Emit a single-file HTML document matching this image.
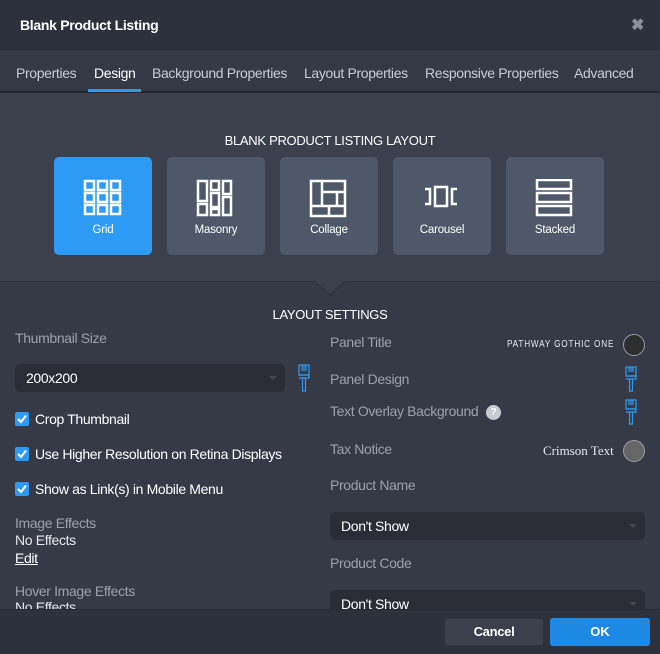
<!DOCTYPE html><html><head><style>
*{box-sizing:border-box;margin:0;padding:0}
body{width:660px;height:654px;background:#2d313b;font-family:"Liberation Sans",sans-serif;position:relative;overflow:hidden;color:#fff}
.a{position:absolute;white-space:nowrap}
.lbl{color:#9ba1ac;font-size:14px;letter-spacing:-0.35px}
.w{color:#fff;font-size:14px;letter-spacing:-0.35px}
.tab{position:absolute;top:65px;font-size:14px;color:#c9ccd3;letter-spacing:-0.35px}
.btn{position:absolute;top:157px;width:98px;height:98px;border-radius:5px;background:#4f5869}
.btn span{position:absolute;top:67px;left:0;right:0;text-align:center;font-size:11.5px;color:#fff;letter-spacing:-0.2px}
.btn svg{position:absolute;left:29px;top:22px}
.sel{position:absolute;background:#2a2d35;border-radius:5px;height:28px;color:#fff;font-size:14px;padding:6px 11px;letter-spacing:-0.35px}
.sel:after{content:"";position:absolute;right:8px;top:12px;border:4px solid transparent;border-top-color:#444852}
.cb{position:absolute;left:15px;width:14px;height:14px;background:#2d9bf6;border-radius:2px}
.cb svg{position:absolute;left:2px;top:2px}
</style></head><body>
<div class="a" style="left:20px;top:17px;font-size:14px;font-weight:bold;letter-spacing:-0.3px">Blank Product Listing</div>
<div class="a" style="left:631px;top:15px;font-size:16px;font-weight:bold;color:#8b9099">✖</div>
<div class="a" style="left:0;top:49px;width:660px;height:44px;background:#343945;border-top:1px solid #262a32;border-bottom:2px solid #23262d"></div>
<div class="tab" style="left:16px">Properties</div>
<div class="tab" style="left:94px;color:#fff">Design</div>
<div class="tab" style="left:152px">Background Properties</div>
<div class="tab" style="left:304px">Layout Properties</div>
<div class="tab" style="left:425px">Responsive Properties</div>
<div class="tab" style="left:574px">Advanced</div>
<div class="a" style="left:88px;top:89px;width:53px;height:3px;background:#2d9bf6"></div>
<div class="a" style="left:0;top:93px;width:660px;height:188px;background:#3b404c"></div>
<div class="a" style="left:0;top:281px;width:660px;height:328px;background:#353a46;border-top:1px solid #2b2f38"></div>
<svg class="a" style="left:314px;top:280px" width="32" height="16"><path d="M0 1 L16 15 L32 1" fill="#3b404c" stroke="#2b2f38" stroke-width="1"/></svg>
<div class="a" style="left:0;top:133px;width:660px;text-align:center;font-size:13px;letter-spacing:-0.3px">BLANK PRODUCT LISTING LAYOUT</div>
<div class="btn" style="left:54px;background:#2d9bf6"><svg width="40" height="40" fill="none" stroke="#fff" stroke-width="2.5"><rect x="2" y="2" width="9" height="9"/><rect x="15" y="2" width="9" height="9"/><rect x="28" y="2" width="9" height="9"/><rect x="2" y="14" width="9" height="9"/><rect x="15" y="14" width="9" height="9"/><rect x="28" y="14" width="9" height="9"/><rect x="2" y="26" width="9" height="9"/><rect x="15" y="26" width="9" height="9"/><rect x="28" y="26" width="9" height="9"/></svg><span>Grid</span></div>
<div class="btn" style="left:167px"><svg width="40" height="40" fill="none" stroke="#fff" stroke-width="2.5"><rect x="2" y="2" width="9" height="20"/><rect x="15" y="2" width="8" height="9"/><rect x="27" y="2" width="8" height="13"/><rect x="15" y="14" width="8" height="14"/><rect x="2" y="25" width="9" height="11"/><rect x="15" y="30" width="8" height="6"/><rect x="27" y="18" width="8" height="18"/></svg><span>Masonry</span></div>
<div class="btn" style="left:280px"><svg width="40" height="40" fill="none" stroke="#fff" stroke-width="2.5"><rect x="2" y="2" width="34" height="35"/><path d="M13 2V27M13 13H36M28 13V27M2 27H36M20 27V37"/></svg><span>Collage</span></div>
<div class="btn" style="left:393px"><svg width="40" height="40" fill="none" stroke="#fff" stroke-width="2.5"><rect x="13" y="8" width="12" height="19"/><path d="M3 10H8V25H3M35 10H30V25H35"/></svg><span>Carousel</span></div>
<div class="btn" style="left:506px"><svg width="40" height="40" fill="none" stroke="#fff" stroke-width="2.5"><rect x="2" y="1" width="34" height="9"/><rect x="2" y="14" width="34" height="9"/><rect x="2" y="27" width="34" height="9"/></svg><span>Stacked</span></div>
<div class="a" style="left:0;top:307px;width:660px;text-align:center;font-size:13px;letter-spacing:-0.3px">LAYOUT SETTINGS</div>
<div class="a lbl" style="left:15px;top:330px">Thumbnail Size</div>
<div class="sel" style="left:15px;top:364px;width:270px">200x200</div>
<svg class="a" style="left:298px;top:364px" width="12" height="28" fill="none" stroke="#2d9bf6" stroke-width="1.2"><rect x="1" y="1" width="10" height="10"/><path d="M4 1V7M6 1V7M8 1V7M1 11H11V14H1M4.5 14V27H7.5V14"/></svg>
<div class="cb" style="top:412px"><svg width="10" height="10"><path d="M1 5L4 8L9 1.5" stroke="#fff" stroke-width="2" fill="none"/></svg></div>
<div class="a w" style="left:35px;top:411px">Crop Thumbnail</div>
<div class="cb" style="top:447px"><svg width="10" height="10"><path d="M1 5L4 8L9 1.5" stroke="#fff" stroke-width="2" fill="none"/></svg></div>
<div class="a w" style="left:35px;top:446px">Use Higher Resolution on Retina Displays</div>
<div class="cb" style="top:482px"><svg width="10" height="10"><path d="M1 5L4 8L9 1.5" stroke="#fff" stroke-width="2" fill="none"/></svg></div>
<div class="a w" style="left:35px;top:481px">Show as Link(s) in Mobile Menu</div>
<div class="a lbl" style="left:15px;top:515px">Image Effects</div>
<div class="a lbl" style="left:15px;top:532px;color:#e6e8ec">No Effects</div>
<div class="a w" style="left:15px;top:550px;text-decoration:underline">Edit</div>
<div class="a lbl" style="left:15px;top:583px">Hover Image Effects</div>
<div class="a lbl" style="left:15px;top:599px;color:#e6e8ec">No Effects</div>
<div class="a lbl" style="left:330px;top:334px">Panel Title</div>
<div class="a" style="left:507px;top:339px;font-size:10px;letter-spacing:1px;color:#e6e8ec;transform:scaleX(0.82);transform-origin:left">PATHWAY GOTHIC ONE</div>
<div class="a" style="left:623px;top:334px;width:22px;height:22px;border-radius:50%;background:#2e2e30;border:1.5px solid #9a9da4"></div>
<div class="a lbl" style="left:330px;top:371px">Panel Design</div>
<svg class="a" style="left:625px;top:366px" width="12" height="26" fill="none" stroke="#2d9bf6" stroke-width="1.2"><rect x="1" y="1" width="10" height="9"/><path d="M4 1V6M6 1V6M8 1V6M1 10H11V13H1M4.5 13V25H7.5V13"/></svg>
<div class="a lbl" style="left:330px;top:403px">Text Overlay Background</div>
<div class="a" style="left:486px;top:405px;width:15px;height:15px;border-radius:50%;background:#c7cacf;color:#fff;font-size:10px;font-weight:bold;text-align:center;line-height:15px">?</div>
<svg class="a" style="left:625px;top:399px" width="12" height="26" fill="none" stroke="#2d9bf6" stroke-width="1.2"><rect x="1" y="1" width="10" height="9"/><path d="M4 1V6M6 1V6M8 1V6M1 10H11V13H1M4.5 13V25H7.5V13"/></svg>
<div class="a lbl" style="left:330px;top:441px">Tax Notice</div>
<div class="a" style="left:543px;top:443px;font-family:'Liberation Serif',serif;font-size:13px;color:#e6e8ec">Crimson Text</div>
<div class="a" style="left:623px;top:440px;width:22px;height:22px;border-radius:50%;background:#666;border:1.5px solid #9a9da4"></div>
<div class="a lbl" style="left:330px;top:477px">Product Name</div>
<div class="sel" style="left:330px;top:512px;width:315px">Don't Show</div>
<div class="a lbl" style="left:330px;top:555px">Product Code</div>
<div class="sel" style="left:330px;top:590px;width:315px">Don't Show</div>
<div class="a" style="left:0;top:609px;width:660px;height:45px;background:#2d313b;border-top:1px solid #262a32"></div>
<div class="a" style="left:445px;top:619px;width:98px;height:26px;background:#3b404c;border-radius:3px;text-align:center;line-height:26px;font-size:13px;font-weight:bold;letter-spacing:-0.3px">Cancel</div>
<div class="a" style="left:550px;top:618px;width:100px;height:28px;background:#1e88e5;border-radius:3px;text-align:center;line-height:28px;font-size:13px;font-weight:bold">OK</div>
</body></html>
